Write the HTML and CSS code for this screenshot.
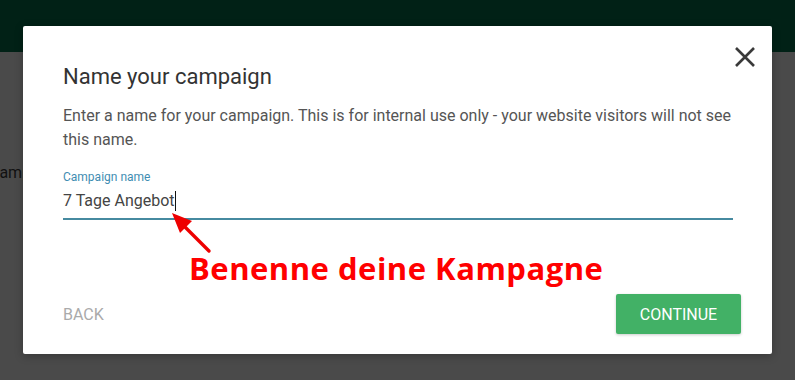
FILE: index.html
```html
<!DOCTYPE html>
<html>
<head>
<meta charset="utf-8">
<link rel="stylesheet" href="styles.css">
</head>
<body>
<div class="app">
  <div class="topbar"></div>
  <div class="backdrop"><span class="bg-text">Campaign</span></div>
</div>
<div class="dialog">
  <button class="close" aria-label="close">
    <svg width="22" height="22" viewBox="0 0 22 22"><path d="M2 2 L20 20 M20 2 L2 20" stroke="#3a3a3a" stroke-width="2.6" fill="none"/></svg>
  </button>
  <h2 class="title">Name your campaign</h2>
  <p class="desc">Enter a name for your campaign. This is for internal use only - your website visitors will not see this name.</p>
  <div class="field">
    <label class="label">Campaign name</label>
    <div class="input">7 Tage Angebot<span class="caret"></span></div>
  </div>
  <div class="actions">
    <span class="back">BACK</span>
    <button class="continue">CONTINUE</button>
  </div>
</div>
<svg class="arrow" width="60" height="60" viewBox="0 0 60 60">
  <line x1="43" y1="44" x2="16" y2="17" stroke="#ee0000" stroke-width="3.4" stroke-linecap="round"/>
  <polygon points="6,6 26,14 14,26" fill="#ee0000"/>
</svg>
<div class="annotation">Benenne deine Kampagne</div>
</body>
</html>
```
FILE: styles.css
```css
html, body {
  margin: 0;
  padding: 0;
}
body {
  width: 795px;
  height: 380px;
  overflow: hidden;
  background: #4a4a4a;
  font-family: Roboto, "Liberation Sans", sans-serif;
  position: relative;
}
.topbar {
  height: 52px;
  background: #012116;
}
.backdrop {
  height: 328px;
  background: #4a4a4a;
  padding-top: 111px;
  box-sizing: border-box;
  margin-left: -11px;
}
.bg-text {
  font-size: 16px;
  color: #111;
}
.dialog {
  position: absolute;
  left: 23px;
  top: 26px;
  width: 749px;
  height: 328px;
  box-sizing: border-box;
  background: #fff;
  border-radius: 2px;
  padding: 37px 39px 0 40px;
  display: flex;
  flex-direction: column;
  box-shadow: 0 2px 8px rgba(0,0,0,0.25);
}
.close {
  position: absolute;
  right: 16px;
  top: 20px;
  border: none;
  background: none;
  padding: 0;
  width: 22px;
  height: 22px;
  cursor: pointer;
}
.close svg { display: block; }
.title {
  margin: 0;
  font-size: 22px;
  font-weight: 400;
  color: #333;
  line-height: 28px;
}
.desc {
  margin: 13px 0 0;
  font-size: 16px;
  line-height: 24px;
  color: #555;
  width: 670px;
}
.field {
  margin-top: 18px;
  width: 670px;
}
.label {
  display: block;
  font-size: 12px;
  line-height: 14px;
  color: #3f8db2;
}
.input {
  margin-top: 6px;
  font-size: 16px;
  line-height: 22px;
  color: #444;
  padding-bottom: 6px;
  border-bottom: 2px solid #468aa0;
}
.caret {
  display: inline-block;
  width: 1px;
  height: 20px;
  background: #111;
  vertical-align: -5px;
}
.actions {
  margin-top: auto;
  margin-bottom: 20px;
  display: flex;
  align-items: center;
  justify-content: space-between;
  margin-right: -8px;
}
.back {
  font-size: 16px;
  color: #aaa;
}
.continue {
  width: 125px;
  height: 40px;
  border: none;
  border-radius: 2px;
  background: #42b166;
  color: #fff;
  font-family: Roboto, "Liberation Sans", sans-serif;
  font-size: 16px;
  box-shadow: 0 1px 3px rgba(0,0,0,0.2);
}
.arrow {
  position: absolute;
  left: 166px;
  top: 207px;
}
.annotation {
  position: absolute;
  left: 189px;
  top: 247px;
  font-family: "Open Sans", sans-serif;
  font-weight: 700;
  font-size: 31px;
  letter-spacing: 0.5px;
  line-height: 42px;
  color: #f00;
}
```
